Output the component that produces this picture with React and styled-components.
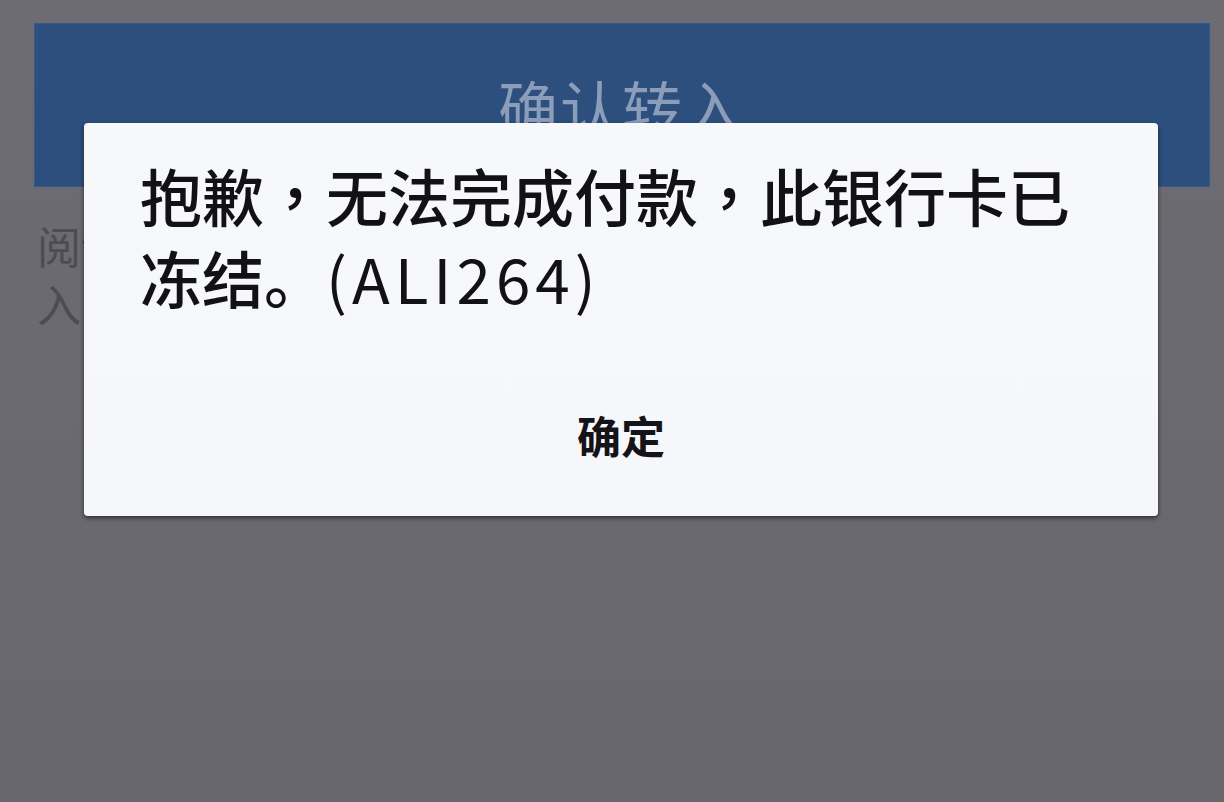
import React from "react";
import styled, { createGlobalStyle } from "styled-components";

const GlobalStyle = createGlobalStyle`
  html, body {
    margin: 0;
    padding: 0;
    background: #6a6a70;
  }
  body {
    font-family: "Noto Sans CJK SC", "Noto Sans", sans-serif;
  }
`;

const Page = styled.div`
  position: relative;
  width: 1224px;
  height: 802px;
  overflow: hidden;
  background: linear-gradient(180deg, #6c6c72 0%, #67676d 100%);
  padding: 23px 14px 0 34px;
  box-sizing: border-box;
`;

const SubmitButton = styled.div`
  height: 164px;
  background: #2c4f7e;
  display: flex;
  align-items: center;
  justify-content: center;
  color: #8b9db8;
  font-size: 60px;
  letter-spacing: 2px;
  box-shadow: inset 0 0 0 1px #34588a;
`;

const Agreement = styled.div`
  margin-top: 29px;
  padding-left: 3px;
  color: #4c4c52;
  font-size: 44px;
  line-height: 58px;
`;

const Overlay = styled.div`
  position: absolute;
  left: 84px;
  top: 123px;
`;

const Dialog = styled.div`
  width: 1074px;
  height: 393px;
  background: linear-gradient(180deg, #f7f8fa 0%, #f6f7fb 100%);
  border-radius: 4px;
  box-shadow: 0 2px 4px rgba(20, 20, 24, 0.7);
  display: flex;
  flex-direction: column;
  box-sizing: border-box;
`;

const Message = styled.p`
  margin: 0;
  padding: 31px 40px 0 56px;
  font-size: 62px;
  line-height: 82px;
  color: #121116;
  font-weight: 500;
`;

const Comma = styled.span`
  font-family: "Noto Sans CJK TC", "Noto Sans CJK SC", sans-serif;
`;

const Code = styled.span`
  letter-spacing: 5px;
  font-weight: 400;
`;

const Action = styled.button`
  margin-top: auto;
  height: 162px;
  border: none;
  background: transparent;
  font-family: inherit;
  font-size: 44px;
  font-weight: 700;
  color: #141318;
  cursor: pointer;
`;

export default function App() {
  return (
    <>
      <GlobalStyle />
      <Page>
        <SubmitButton>确认转入</SubmitButton>
        <Agreement>
          阅读并同意《服务协议》，确认转
          <br />
          入
        </Agreement>
        <Overlay>
          <Dialog>
            <Message>
              抱歉<Comma>，</Comma>无法完成付款<Comma>，</Comma>此银行卡已冻结。
              <Code>(ALI264)</Code>
            </Message>
            <Action>确定</Action>
          </Dialog>
        </Overlay>
      </Page>
    </>
  );
}
